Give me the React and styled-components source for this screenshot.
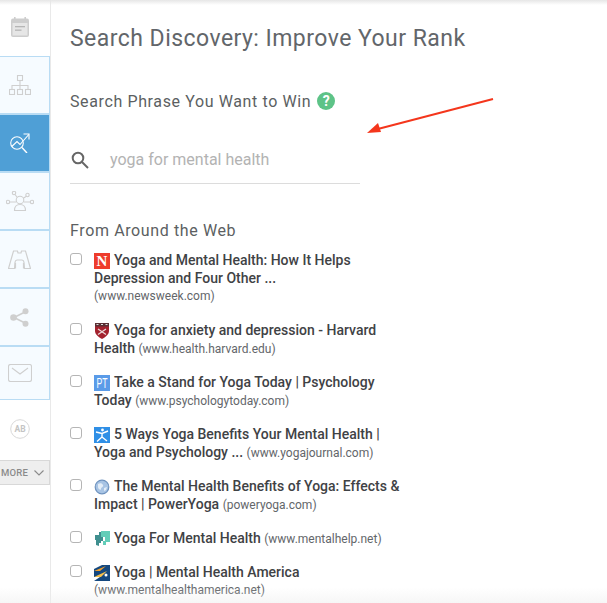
import React from 'react';
import styled, { createGlobalStyle } from 'styled-components';

const GlobalStyle = createGlobalStyle`
  html, body {
    margin: 0;
    padding: 0;
    background: #fff;
  }
  body {
    font-family: Roboto, "Liberation Sans", sans-serif;
    overflow: hidden;
  }
`;

const Page = styled.div`
  position: relative;
  display: flex;
  width: 607px;
  height: 603px;
  overflow: hidden;
  background: #fff;

  &:before {
    content: '';
    position: absolute;
    top: 0;
    left: 0;
    right: 0;
    height: 5px;
    background: linear-gradient(#e6e6e6, rgba(255, 255, 255, 0));
    z-index: 3;
  }
  &:after {
    content: '';
    position: absolute;
    bottom: 0;
    left: 0;
    right: 0;
    height: 16px;
    background: linear-gradient(rgba(255, 255, 255, 0), rgba(238, 238, 238, 0.5));
    z-index: 3;
  }
`;

const Sidebar = styled.nav`
  flex: 0 0 51px;
  box-sizing: border-box;
  width: 51px;
  border-right: 1px solid #e9e9e9;
  display: flex;
  flex-direction: column;
`;

const PlainSlot = styled.div`
  box-sizing: border-box;
  width: 50px;
  height: ${p => p.$h}px;
  padding-right: 10px;
  padding-bottom: ${p => p.$lift || 0}px;
  display: flex;
  align-items: center;
  justify-content: center;
`;

const NavItem = styled.div`
  box-sizing: border-box;
  width: 50px;
  height: ${p => p.$h || 58}px;
  padding-right: 10px;
  display: flex;
  align-items: center;
  justify-content: center;
  background: ${p => (p.$active ? '#4f9fd6' : '#f6fbff')};
  border: 1px solid #b9dcf4;
  border-left: 0;
`;

const MoreButton = styled.div`
  box-sizing: border-box;
  width: 50px;
  height: 25px;
  margin-top: 2px;
  display: flex;
  align-items: center;
  gap: 6px;
  padding-left: 1px;
  background: #eeeeee;
  border: 1px solid #d8d8d8;
  border-left: 0;
  font-size: 9.5px;
  font-weight: 500;
  color: #8a8a8a;
  letter-spacing: 0.2px;
`;

const Main = styled.main`
  flex: 1;
  box-sizing: border-box;
  padding: 25px 0 0 19px;
  min-width: 0;
`;

const Title = styled.h1`
  margin: 0;
  font-size: 23px;
  line-height: 28px;
  font-weight: 400;
  color: #62666a;
  letter-spacing: 0.46px;
`;

const SectionLabel = styled.div`
  display: flex;
  align-items: center;
  gap: 6px;
  margin-top: 36px;
  height: 24px;
  font-size: 16px;
  color: #5c5f62;
  letter-spacing: 0.62px;
`;

const HelpBadge = styled.span`
  width: 18px;
  height: 18px;
  border-radius: 50%;
  background: #5dc387;
  color: #fff;
  font-size: 14px;
  font-weight: 700;
  letter-spacing: 0;
  display: flex;
  align-items: center;
  justify-content: center;
`;

const SearchBox = styled.div`
  box-sizing: border-box;
  width: 290px;
  height: 58px;
  margin-top: 13px;
  display: flex;
  align-items: center;
  gap: 20px;
  padding-top: 10px;
  border-bottom: 1px solid #dcdcdc;
`;

const SearchText = styled.span`
  font-size: 16px;
  color: #b3b3b3;
`;

const WebHeading = styled.div`
  margin-top: 36px;
  font-size: 16px;
  line-height: 22px;
  color: #5c5f62;
  letter-spacing: 0.62px;
`;

const ResultList = styled.ul`
  list-style: none;
  margin: 9px 0 0;
  padding: 0;
  width: 340px;
`;

const Result = styled.li`
  display: flex;
  align-items: flex-start;
  margin-bottom: 16px;
`;

const Check = styled.span`
  flex: 0 0 12px;
  box-sizing: border-box;
  width: 12px;
  height: 12px;
  margin: 2px 12px 0 0;
  border: 1px solid #b5b5b5;
  border-radius: 3px;
  background: #fff;
`;

const ResultText = styled.div`
  font-size: 14px;
  line-height: 18px;
  font-weight: 500;
  color: #3f4245;
`;

const Domain = styled.span`
  font-size: 12px;
  line-height: 12px;
  font-weight: 400;
  color: #63666a;
`;

const BlockDomain = styled(Domain)`
  display: block;
  line-height: 18px;
`;

const Favicon = styled.span`
  display: inline-flex;
  align-items: center;
  justify-content: center;
  vertical-align: top;
  width: 16px;
  height: 16px;
  margin: 2px 4px -2px 0;
  background: ${p => p.$bg || 'transparent'};
  color: #fff;
  overflow: hidden;
`;

const NewsN = styled.span`
  font-family: "Liberation Serif", serif;
  font-weight: 700;
  font-size: 15px;
  line-height: 16px;
`;

const PtText = styled.span`
  font-family: "Liberation Sans", sans-serif;
  font-size: 14px;
  line-height: 16px;
  letter-spacing: 0;
  transform: scaleX(0.62);
`;

const Arrow = styled.svg`
  position: absolute;
  left: 360px;
  top: 90px;
`;

const stroke = { fill: 'none', stroke: '#cfcfcf', strokeWidth: 1.1 };

const CalendarIcon = () => (
  <svg width="18" height="20" viewBox="0 0 18 20">
    <rect x="0" y="1.500" width="18" height="18.500" rx="2" fill="#cdcdcd" />
    <rect x="3" y="0" width="1.600" height="3" fill="#cdcdcd" />
    <rect x="13.400" y="0" width="1.600" height="3" fill="#cdcdcd" />
    <rect x="1.500" y="6" width="15" height="12.500" fill="#e6e6e6" />
    <rect x="4" y="9" width="10" height="1.300" fill="#b5b5b5" />
    <rect x="4" y="12.500" width="6.500" height="1.300" fill="#b5b5b5" />
  </svg>
);

const TreeIcon = () => (
  <svg width="22" height="20" viewBox="0 0 22 20" {...stroke}>
    <rect x="8.500" y="0.500" width="5" height="5" />
    <rect x="0.500" y="14.500" width="5" height="5" />
    <rect x="8.500" y="14.500" width="5" height="5" />
    <rect x="16.500" y="14.500" width="5" height="5" />
    <path d="M11 5.500v9M3 14.500v-4h16v4" />
  </svg>
);

const TrendIcon = () => (
  <svg width="20" height="20" viewBox="0 0 20 20" fill="none" stroke="#fff" strokeWidth="1.100">
    <circle cx="7" cy="10" r="6.300" />
    <path d="M1.800 13.500 7 8.500l3 3L18.800 1.500" />
    <path d="M13.500 1h5.500v5.500" />
    <path d="m12 14.500 5 5.500" strokeWidth="1.400" />
  </svg>
);

const AudienceIcon = () => (
  <svg width="28" height="20" viewBox="0 0 28 20" {...stroke}>
    <circle cx="14" cy="9" r="3.800" />
    <path d="M8.500 19.500c0-4 2-6 5.500-6s5.500 2 5.500 6z" />
    <circle cx="8" cy="2" r="1.700" />
    <circle cx="21.500" cy="4" r="1.700" />
    <circle cx="2" cy="11" r="1.700" />
    <circle cx="26" cy="11" r="1.700" />
    <path d="m9 3.500 2.300 3M20 5.500l-2.700 1.700M3.700 11H10M24.300 11H18" />
  </svg>
);

const BinocularsIcon = () => (
  <svg width="23" height="19" viewBox="0 0 23 19" {...stroke} strokeWidth="1.200">
    <path d="M5.500 1h4l.5 2h3l.5-2h4L22.500 18.500h-6l-.5-6a2.500 2.500 0 0 0-2-2.500H9a2.500 2.500 0 0 0-2 2.500l-.5 6H.5z" />
    <path d="M7.500 18.500V13M15.500 18.500V13" />
  </svg>
);

const ShareIcon = () => (
  <svg width="19" height="19" viewBox="0 0 19 19">
    <path d="M15 4 4 9.500 15 15" fill="none" stroke="#cfcfcf" strokeWidth="1.600" />
    <circle cx="15.500" cy="3.200" r="3" fill="#cfcfcf" />
    <circle cx="15.500" cy="15.800" r="3" fill="#cfcfcf" />
    <circle cx="3.500" cy="9.500" r="3.300" fill="#cfcfcf" />
  </svg>
);

const MailIcon = () => (
  <svg width="24" height="18" viewBox="0 0 24 18" {...stroke}>
    <rect x="0.500" y="0.500" width="23" height="17" rx="2" />
    <path d="m4 4 8 6 8-6" />
  </svg>
);

const AbIcon = () => (
  <svg width="20" height="20" viewBox="0 0 20 20">
    <circle cx="10" cy="10" r="9.300" fill="none" stroke="#d8d8d8" />
    <text x="10" y="13" textAnchor="middle" fontFamily="Roboto, sans-serif" fontSize="8.500" fontWeight="700" fill="#c4c4c4">
      AB
    </text>
  </svg>
);

const Chevron = () => (
  <svg width="10" height="6" viewBox="0 0 10 6" fill="none" stroke="#8a8a8a" strokeWidth="1.100">
    <path d="m.5.5 4.500 4.500L9.500.5" />
  </svg>
);

const SearchIcon = () => (
  <svg width="20" height="20" viewBox="0 0 20 20" fill="none" stroke="#666" strokeWidth="2">
    <circle cx="8" cy="8" r="5.300" />
    <path d="m12 12 6 6" />
  </svg>
);

const HarvardIcon = () => (
  <svg width="14" height="16" viewBox="0 0 14 16">
    <path d="M0 0h14v8c0 3.500-3.500 6-7 8-3.500-2-7-4.500-7-8z" fill="#a3222e" />
    <rect x="0" y="0" width="14" height="3.500" fill="#5a3034" />
    <path d="M1.500 1.500h2M6 1.500h2M10.500 1.500h2" stroke="#ddd" strokeWidth="1.200" />
    <path d="m3 6 8 5.500M11 6l-8 5.500" stroke="#ecd9d9" strokeWidth="1.300" />
  </svg>
);

const YogaIcon = () => (
  <svg width="16" height="16" viewBox="0 0 16 16">
    <rect width="16" height="16" fill="#2f8fe6" />
    <circle cx="8.500" cy="3" r="1.400" fill="#fff" />
    <path d="M2 5l6 1.500L14 4M8 6v4l-5 4.500M8 10l5 4" stroke="#fff" strokeWidth="1.400" fill="none" />
  </svg>
);

const GlobeIcon = () => (
  <svg width="16" height="16" viewBox="0 0 16 16">
    <circle cx="8" cy="8" r="6.800" fill="#a8c4e4" stroke="#6f93bf" strokeWidth="1.200" />
    <path d="M4 5c2-1 4-1 5 1s-2 2-2 4-3 0-3-2zM10 9l3-1-1 3-2 1z" fill="#e3edf7" />
  </svg>
);

const PuzzleIcon = () => (
  <svg width="16" height="16" viewBox="0 0 16 16">
    <path d="M1 4h4V1h2v5h2v4H7v2H5v3l-3-1V9H1z" fill="#3f8f8f" />
    <path d="M7 0h9v11h-4v3H9v-4h2V6H7z" fill="#63cdb8" />
  </svg>
);

const MhaIcon = () => (
  <svg width="16" height="16" viewBox="0 0 16 16">
    <rect width="16" height="16" fill="#15487f" />
    <path d="M0 0h8L0 4z" fill="#fff" />
    <path d="M0 6 12 1 6 6z" fill="#f2a02e" />
    <path d="M0 12 13 6 7 12z" fill="#f7c04a" />
    <path d="M0 12h6L0 16z" fill="#fff" />
    <circle cx="12" cy="10" r="1.500" fill="#fff" />
  </svg>
);

const results = [
  {
    icon: <Favicon $bg="#ee3c2c"><NewsN>N</NewsN></Favicon>,
    title: 'Yoga and Mental Health: How It Helps Depression and Four Other ...',
    domain: '(www.newsweek.com)',
    block: true,
  },
  {
    icon: <Favicon><HarvardIcon /></Favicon>,
    title: 'Yoga for anxiety and depression - Harvard Health',
    domain: '(www.health.harvard.edu)',
  },
  {
    icon: <Favicon $bg="#5a9be8"><PtText>PT</PtText></Favicon>,
    title: 'Take a Stand for Yoga Today | Psychology Today',
    domain: '(www.psychologytoday.com)',
  },
  {
    icon: <Favicon><YogaIcon /></Favicon>,
    title: '5 Ways Yoga Benefits Your Mental Health | Yoga and Psychology ...',
    domain: '(www.yogajournal.com)',
  },
  {
    icon: <Favicon><GlobeIcon /></Favicon>,
    title: 'The Mental Health Benefits of Yoga: Effects & Impact | PowerYoga',
    domain: '(poweryoga.com)',
  },
  {
    icon: <Favicon><PuzzleIcon /></Favicon>,
    title: 'Yoga For Mental Health',
    domain: '(www.mentalhelp.net)',
  },
  {
    icon: <Favicon><MhaIcon /></Favicon>,
    title: 'Yoga | Mental Health America',
    domain: '(www.mentalhealthamerica.net)',
    block: true,
  },
];

export default function App() {
  return (
    <Page>
      <GlobalStyle />
      <Sidebar>
        <PlainSlot $h={56} $lift={2}><CalendarIcon /></PlainSlot>
        <NavItem><TreeIcon /></NavItem>
        <NavItem $active><TrendIcon /></NavItem>
        <NavItem><AudienceIcon /></NavItem>
        <NavItem><BinocularsIcon /></NavItem>
        <NavItem><ShareIcon /></NavItem>
        <NavItem $h={54}><MailIcon /></NavItem>
        <PlainSlot $h={58}><AbIcon /></PlainSlot>
        <MoreButton>MORE <Chevron /></MoreButton>
      </Sidebar>
      <Main>
        <Title>Search Discovery: Improve Your Rank</Title>
        <SectionLabel>
          Search Phrase You Want to Win
          <HelpBadge>?</HelpBadge>
        </SectionLabel>
        <SearchBox>
          <SearchIcon />
          <SearchText>yoga for mental health</SearchText>
        </SearchBox>
        <WebHeading>From Around the Web</WebHeading>
        <ResultList>
          {results.map(r => (
            <Result key={r.domain}>
              <Check />
              <ResultText>
                {r.icon}
                {r.title}{' '}
                {r.block ? <BlockDomain>{r.domain}</BlockDomain> : <Domain>{r.domain}</Domain>}
              </ResultText>
            </Result>
          ))}
        </ResultList>
      </Main>
      <Arrow width="140" height="50" viewBox="0 0 140 50">
        <path d="M133 9 14 40" stroke="#f4361c" strokeWidth="2" fill="none" />
        <path d="M7 43 18 33l3 9z" fill="#f4361c" />
      </Arrow>
    </Page>
  );
}
